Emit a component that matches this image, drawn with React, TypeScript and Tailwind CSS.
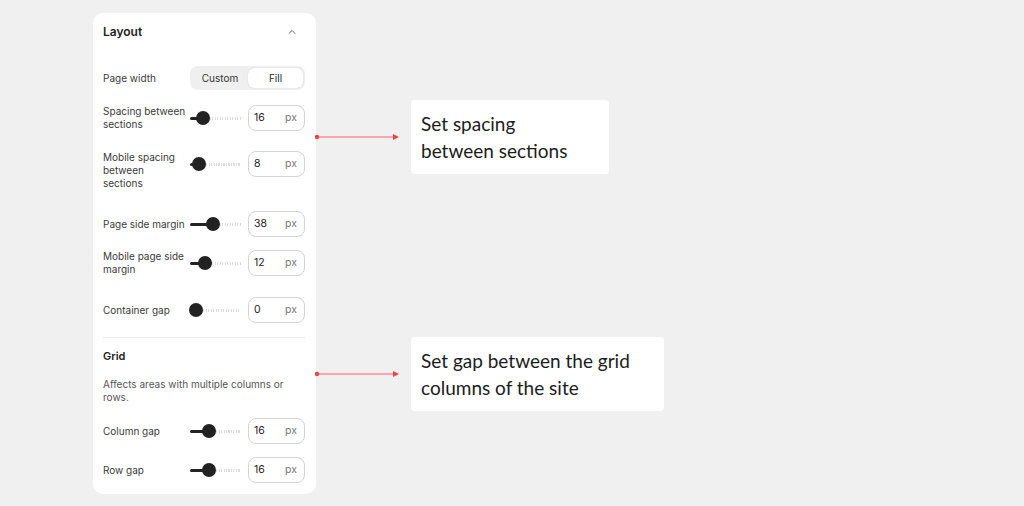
import { ChevronUp } from "lucide-react";

type Row = {
  label: string;
  value: number;
  fill: number; // px from slider start to thumb center
  lines?: number;
  mt: string;
};

const layoutRows: Row[] = [
  { label: "Spacing between\nsections", value: 16, fill: 13, mt: "mt-[15px]" },
  { label: "Mobile spacing\nbetween\nsections", value: 8, fill: 9, lines: 3, mt: "mt-[20px]" },
  { label: "Page side margin", value: 38, fill: 23, mt: "mt-[21px]" },
  { label: "Mobile page side\nmargin", value: 12, fill: 15, mt: "mt-[13px]" },
  { label: "Container gap", value: 0, fill: 6, mt: "mt-[21px]" },
];

const gridRows: Row[] = [
  { label: "Column gap", value: 16, fill: 19, mt: "mt-[14px]" },
  { label: "Row gap", value: 16, fill: 19, mt: "mt-[13px]" },
];

function Slider({ fill }: { fill: number }) {
  return (
    <div className="relative flex h-[14px] w-[51px] items-center">
      <div className="h-[3px] rounded-full bg-[#222]" style={{ width: fill }} />
      <div className="ml-[7px] h-[3px] flex-1 bg-[repeating-linear-gradient(90deg,#dcdcdc_0_1px,transparent_1px_2.5px)]" />
      <div
        className="absolute top-0 h-[14px] w-[14px] rounded-full bg-[#222]"
        style={{ left: fill - 7 }}
      />
    </div>
  );
}

function NumberInput({ value }: { value: number }) {
  return (
    <div className="flex h-[26px] w-[57px] items-center justify-between rounded-lg border border-[#d4d4d4] bg-white pl-[5px] pr-[7px]">
      <span className="text-[10.5px] text-[#222]">{value}</span>
      <span className="text-[10.5px] text-[#777]">px</span>
    </div>
  );
}

function SettingRow({ row }: { row: Row }) {
  return (
    <div
      className={`flex ${row.lines === 3 ? "items-start" : "items-center"} ${row.mt}`}
    >
      <div className="w-[87px] whitespace-pre-line text-[10px] leading-[13px] text-[#3a3a3a]">
        {row.label}
      </div>
      <div className="flex h-[26px] items-center gap-[7px]">
        <Slider fill={row.fill} />
        <NumberInput value={row.value} />
      </div>
    </div>
  );
}

function Arrow() {
  return (
    <svg width="88" height="8" viewBox="0 0 88 8" className="block">
      <line x1="3" y1="4" x2="82" y2="4" stroke="#f89090" strokeWidth="1.5" />
      <circle cx="3" cy="4" r="2.2" fill="#ef4444" />
      <path d="M79 1 L85 4 L79 7 Z" fill="#ef4444" />
    </svg>
  );
}

function Callout({ lines }: { lines: string[] }) {
  return (
    <div
      className="rounded bg-white px-[10px] py-[10px] text-[19px] leading-[27px] text-[#1c1c1c]"
      style={{ fontFamily: "Lato, 'Open Sans', sans-serif" }}
    >
      {lines.map((l) => (
        <div key={l} className="whitespace-nowrap">
          {l}
        </div>
      ))}
    </div>
  );
}

export default function App() {
  return (
    <div
      className="relative h-[506px] w-[1024px] overflow-hidden bg-[#f0f0f0]"
      style={{ fontFamily: "Inter, 'Noto Sans', sans-serif" }}
    >
      <div className="ml-[93px] mt-[13px] w-[223px] rounded-[10px] bg-white pb-[11px] pl-[10px] pr-[11px]">
        {/* Layout header */}
        <div className="flex h-[38px] items-center justify-between">
          <span className="text-[12px] font-semibold text-[#222]">Layout</span>
          <ChevronUp className="mr-[7px] h-[12px] w-[12px] text-[#666]" strokeWidth={2} />
        </div>

        <div className="mt-[15px] flex items-center">
          <div className="w-[87px] text-[10px] leading-[13px] text-[#3a3a3a]">Page width</div>
          <div className="flex h-[24px] flex-1 rounded-lg bg-[#efefef] p-[2px]">
            <div className="flex flex-1 items-center justify-center text-[10px] text-[#333]">
              Custom
            </div>
            <div className="flex w-[55px] items-center justify-center rounded-md bg-white text-[10px] text-[#222] shadow-[0_0_1px_rgba(0,0,0,0.25)]">
              Fill
            </div>
          </div>
        </div>

        {layoutRows.map((r) => (
          <SettingRow key={r.label} row={r} />
        ))}

        <div className="mt-[14px] border-t border-[#ebebeb]" />

        <div className="mt-[11px] text-[11px] font-semibold leading-[14px] text-[#222]">
          Grid
        </div>
        <p className="mt-[15px] text-[10px] leading-[13px] text-[#555]">
          Affects areas with multiple columns or rows.
        </p>

        {gridRows.map((r) => (
          <SettingRow key={r.label} row={r} />
        ))}
      </div>

      {/* Callouts */}
      <div className="absolute left-[314px] top-[133px]">
        <Arrow />
      </div>
      <div className="absolute left-[411px] top-[100px] w-[198px]">
        <Callout lines={["Set spacing", "between sections"]} />
      </div>

      <div className="absolute left-[314px] top-[370px]">
        <Arrow />
      </div>
      <div className="absolute left-[411px] top-[337px] w-[253px]">
        <Callout lines={["Set gap between the grid", "columns of the site"]} />
      </div>
    </div>
  );
}
